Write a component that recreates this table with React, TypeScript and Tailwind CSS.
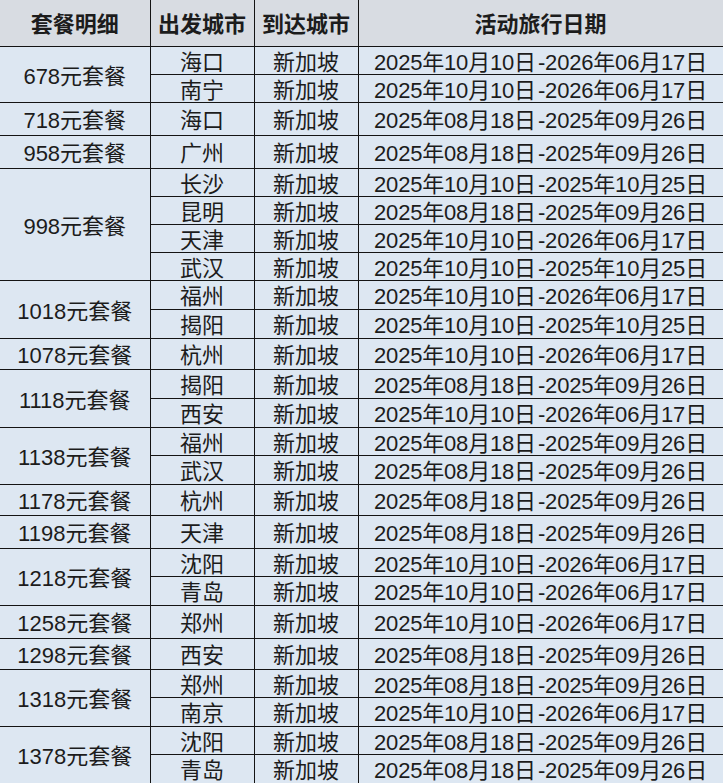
import React from 'react';

type Row = { city: string; date: string; h: string };
type Group = { name: string; rows: Row[] };

const A = '2025年10月10日-2026年06月17日';
const B = '2025年08月18日-2025年09月26日';
const C = '2025年10月10日-2025年10月25日';

const groups: Group[] = [
  { name: '678元套餐', rows: [{ city: '海口', date: A, h: 'h-[28px]' }, { city: '南宁', date: A, h: 'h-[28px]' }] },
  { name: '718元套餐', rows: [{ city: '海口', date: B, h: 'h-[33px]' }] },
  { name: '958元套餐', rows: [{ city: '广州', date: B, h: 'h-[33px]' }] },
  {
    name: '998元套餐',
    rows: [
      { city: '长沙', date: C, h: 'h-[28px]' },
      { city: '昆明', date: B, h: 'h-[28px]' },
      { city: '天津', date: A, h: 'h-[28px]' },
      { city: '武汉', date: C, h: 'h-[28px]' },
    ],
  },
  { name: '1018元套餐', rows: [{ city: '福州', date: A, h: 'h-[29px]' }, { city: '揭阳', date: C, h: 'h-[29px]' }] },
  { name: '1078元套餐', rows: [{ city: '杭州', date: A, h: 'h-[31px]' }] },
  { name: '1118元套餐', rows: [{ city: '揭阳', date: B, h: 'h-[29px]' }, { city: '西安', date: A, h: 'h-[29px]' }] },
  { name: '1138元套餐', rows: [{ city: '福州', date: B, h: 'h-[27px]' }, { city: '武汉', date: B, h: 'h-[29px]' }] },
  { name: '1178元套餐', rows: [{ city: '杭州', date: B, h: 'h-[31px]' }] },
  { name: '1198元套餐', rows: [{ city: '天津', date: B, h: 'h-[33px]' }] },
  { name: '1218元套餐', rows: [{ city: '沈阳', date: A, h: 'h-[28px]' }, { city: '青岛', date: A, h: 'h-[29px]' }] },
  { name: '1258元套餐', rows: [{ city: '郑州', date: A, h: 'h-[33px]' }] },
  { name: '1298元套餐', rows: [{ city: '西安', date: B, h: 'h-[31px]' }] },
  { name: '1318元套餐', rows: [{ city: '郑州', date: B, h: 'h-[28px]' }, { city: '南京', date: A, h: 'h-[29px]' }] },
  { name: '1378元套餐', rows: [{ city: '沈阳', date: B, h: 'h-[28px]' }, { city: '青岛', date: B, h: 'h-[29px]' }] },
];

const cell = 'border-b border-r border-[#141414] px-0 pt-[5px] pb-0 text-center align-middle';

// put a little air around the dash, as in the sheet
const fmtDate = (d: string) => {
  const [a, b] = d.split('-');
  return (
    <>
      {a}
      <span className="ml-[2px]">-</span>
      {b}
    </>
  );
};

export default function App() {
  return (
    <div className="w-[723px] h-[783px] overflow-hidden bg-white font-['Liberation_Sans','Noto_Sans_CJK_SC',sans-serif] text-[22px] leading-none text-[#1c1c1c]">
      <table className="w-[723px] table-fixed border-collapse">
        <colgroup>
          <col className="w-[150px]" />
          <col className="w-[104px]" />
          <col className="w-[104px]" />
          <col className="w-[365px]" />
        </colgroup>
        <thead>
          <tr className="h-[46px] bg-[#d8dce2] font-bold">
            <th className={cell}>套餐明细</th>
            <th className={cell}>出发城市</th>
            <th className={cell}>到达城市</th>
            <th className={cell}>活动旅行日期</th>
          </tr>
        </thead>
        <tbody className="bg-[#dde7f2]">
          {groups.map((g) =>
            g.rows.map((r, i) => (
              <tr key={g.name + i} className={r.h}>
                {i === 0 && (
                  <td rowSpan={g.rows.length} className={cell}>
                    {g.name}
                  </td>
                )}
                <td className={cell}>{r.city}</td>
                <td className={cell}>新加坡</td>
                <td className={`${cell} tracking-[-0.18px]`}>{fmtDate(r.date)}</td>
              </tr>
            ))
          )}
        </tbody>
      </table>
    </div>
  );
}
